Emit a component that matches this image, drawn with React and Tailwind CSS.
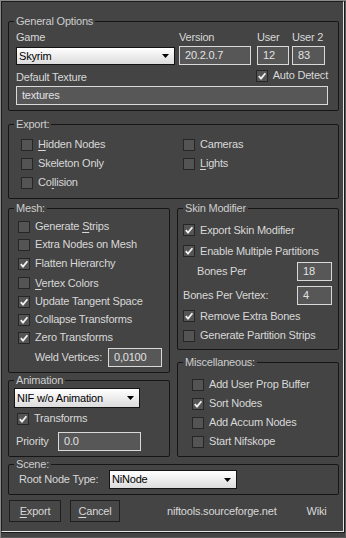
import React from 'react';

const Box = ({ checked }) => (
  <span className="w-[12px] h-[12px] shrink-0 bg-[#545454] border border-[#262626] flex items-center justify-center">
    {checked && (
      <svg viewBox="0 0 10 10" className="w-[10px] h-[10px]">
        <path d="M1.8 5.2 L4 7.6 L8.4 2.2" stroke="#f2f2f2" strokeWidth="1.8" fill="none" />
      </svg>
    )}
  </span>
);

const Check = ({ checked, children, className = '' }) => (
  <div className={`flex items-center gap-[5px] ${className}`}>
    <Box checked={checked} />
    <span className="whitespace-nowrap">{children}</span>
  </div>
);

const Field = ({ value, className = '' }) => (
  <div className={`h-[19px] border border-[#d9d9d9] bg-[#575757] pl-[5px] flex items-center text-[#e2e2e2] whitespace-nowrap ${className}`}>
    {value}
  </div>
);

const Select = ({ value, className = '' }) => (
  <div className={`border border-[#141414] bg-linear-to-b from-white to-[#dcdcdc] flex items-center justify-between pl-[2px] pr-[5px] text-black ${className}`}>
    <span>{value}</span>
    <svg viewBox="0 0 7 4" className="w-[7px] h-[4px]">
      <path d="M0 0 H7 L3.5 4 Z" fill="#000" />
    </svg>
  </div>
);

const Group = ({ title, className = '', children }) => (
  <fieldset className={`border border-[#161616] rounded-[2px] min-w-0 ${className}`}>
    <legend className="ml-[5px] px-[2px] leading-[13px] text-[#cdcdcd]">{title}</legend>
    {children}
  </fieldset>
);

const Key = ({ children }) => <u className="underline-offset-[2px]">{children}</u>;

export default function App() {
  return (
    <div className="w-[346px] h-[538px] bg-[#444444] border border-t-[#8a8a8a] border-l-[#8a8a8a] border-r-[#5a5a5a] border-b-[#5a5a5a] font-['Liberation_Sans',Arial,sans-serif] text-[11px] tracking-[-0.2px] text-[#d8d8d8] overflow-hidden">
      <div className="h-[532px] border-r border-b border-[#1a1a1a]">
        <div className="h-[531px] border-t border-l border-[#1c1c1c] border-r border-b border-r-[#e4e4e4] border-b-[#e4e4e4] pl-[6px] pr-[4px] pt-[13px]">
          {/* General */}
          <Group title="General Options">
            <div className="pl-[7px] pr-[10px] pb-[5px]">
              <div className="grid grid-cols-[163px_78px_35px_33px] mt-[3px] leading-[13px]">
                <span>Game</span>
                <span>Version</span>
                <span>User</span>
                <span>User 2</span>
              </div>
              <div className="grid grid-cols-[163px_78px_35px_33px] mt-[2px] items-start">
                <Select value="Skyrim" className="w-[159px] h-[18px] mt-[1px]" />
                <Field value="20.2.0.7" className="w-[72px]" />
                <Field value="12" className="w-[32px]" />
                <Field value="83" className="w-[33px]" />
              </div>
              <div className="flex justify-between items-start mt-[4px]">
                <span className="mt-[2px] leading-[13px]">Default Texture</span>
                <Check checked className="h-[13px]">Auto Detect</Check>
              </div>
              <Field value="textures" className="mt-[2px]" />
            </div>
          </Group>

          {/* Export */}
          <Group title="Export:" className="mt-[7px]">
            <div className="grid grid-cols-[162px_1fr] pl-[12px] pt-[4px] pb-[6px]">
              <Check className="h-[19px]"><Key>H</Key>idden Nodes</Check>
              <Check className="h-[19px]">Cameras</Check>
              <Check className="h-[19px]">Skeleton Only</Check>
              <Check className="h-[19px]"><Key>L</Key>ights</Check>
              <Check className="h-[19px]">Co<Key>l</Key>lision</Check>
            </div>
          </Group>

          <div className="grid grid-cols-2 gap-x-[7px] mt-[3px]">
            {/* left column */}
            <div className="flex flex-col">
              <Group title="Mesh:">
                <div className="pl-[9px] pr-[7px] pt-[2px] pb-[5px]">
                  <Check className="h-[19px]">Generate <Key>S</Key>trips</Check>
                  <Check className="h-[17px]">Extra Nodes on Mesh</Check>
                  <Check checked className="h-[21px]">Flatten Hierarchy</Check>
                  <Check className="h-[18px]"><Key>V</Key>ertex Colors</Check>
                  <Check checked className="h-[19px]">Update Tangent Space</Check>
                  <Check checked className="h-[17px]">Collapse Transforms</Check>
                  <Check checked className="h-[19px]">Zero Transforms</Check>
                  <div className="flex justify-end items-center gap-[6px] mt-[1px]">
                    <span>Weld Vertices:</span>
                    <Field value="0,0100" className="w-[54px]" />
                  </div>
                </div>
              </Group>
              <Group title="Animation" className="mt-[1px]">
                <div className="pl-[5px] pr-[7px] pb-[5px]">
                  <Select value="NIF w/o Animation" className="w-[126px] h-[20px] mt-[1px]" />
                  <Check checked className="h-[21px] ml-[3px]">Transforms</Check>
                  <div className="flex items-center mt-[3px] pl-[2px]">
                    <span className="w-[42px]">Priority</span>
                    <Field value="0.0" className="w-[83px]" />
                  </div>
                </div>
              </Group>
            </div>

            {/* right column */}
            <div className="flex flex-col">
              <Group title="Skin Modifier">
                <div className="pl-[5px] pr-[6px] pt-[5px] pb-[5px]">
                  <Check checked className="h-[20px]">Export Skin Modifier</Check>
                  <Check checked className="h-[22px]">Enable Multiple Partitions</Check>
                  <div className="flex justify-between items-center">
                    <span className="pl-[14px]">Bones Per</span>
                    <Field value="18" className="w-[35px]" />
                  </div>
                  <div className="flex justify-between items-center mt-[5px]">
                    <span>Bones Per Vertex:</span>
                    <Field value="4" className="w-[35px]" />
                  </div>
                  <Check checked className="h-[22px]">Remove Extra Bones</Check>
                  <Check className="h-[17px]">Generate Partition Strips</Check>
                </div>
              </Group>
              <Group title="Miscellaneous:" className="mt-[6px]">
                <div className="pl-[14px] pt-[6px] pb-[5px]">
                  <Check className="h-[19px]">Add User Prop Buffer</Check>
                  <Check checked className="h-[19px]">Sort Nodes</Check>
                  <Check className="h-[19px]">Add Accum Nodes</Check>
                  <Check className="h-[19px]">Start Nifskope</Check>
                </div>
              </Group>
            </div>
          </div>

          {/* Scene */}
          <Group title="Scene:" className="mt-[1px]">
            <div className="flex items-center pl-[10px] pb-[5px] -mt-[1px]">
              <span className="w-[90px]">Root Node Type:</span>
              <Select value="NiNode" className="w-[128px] h-[19px]" />
            </div>
          </Group>

          {/* footer */}
          <div className="flex items-center mt-[5px] pl-[1px]">
            <button className="h-[22px] w-[52px] border border-[#1e1e1e] bg-[#474747] text-[#d8d8d8]">
              <Key>E</Key>xport
            </button>
            <button className="h-[22px] w-[50px] ml-[9px] border border-[#1e1e1e] bg-[#474747] text-[#d8d8d8]">
              <Key>C</Key>ancel
            </button>
            <span className="ml-[47px]">niftools.sourceforge.net</span>
            <span className="ml-[30px]">Wiki</span>
          </div>
        </div>
      </div>
    </div>
  );
}
